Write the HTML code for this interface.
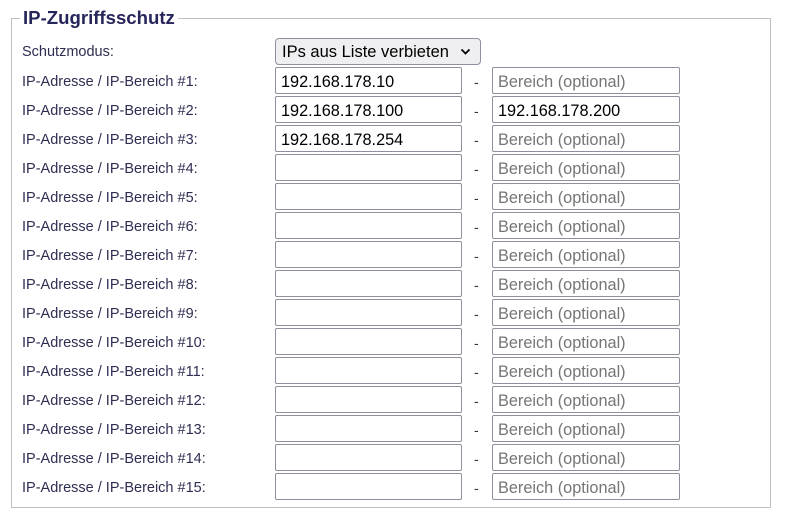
<!DOCTYPE html>
<html><head><style>
body{margin:0;background:#fff;font-family:"Liberation Sans",Arial,sans-serif;}
.fs{position:absolute;left:11px;top:18px;width:760px;height:490px;border:1px solid #c0c0c0;box-sizing:border-box;}
.lg{position:absolute;left:20px;top:7px;background:#fff;padding:0 3px;font-weight:bold;font-size:18.6px;color:#26265a;line-height:22px;}
.lb{position:absolute;left:22px;font-size:14.5px;color:#2e2e52;line-height:16px;}
.in{position:absolute;height:27px;box-sizing:border-box;border:1px solid #8f8f9d;border-radius:2px;font-size:16.3px;line-height:28px;padding-left:5px;color:#000;background:#fff;}
.a{left:275px;width:187px}.b{left:492px;width:188px}
.ph{color:#757575}
.d{position:absolute;left:474px;font-size:14px;color:#333;}
.sel{position:absolute;left:275px;top:38px;width:206px;height:27px;box-sizing:border-box;border:1px solid #8f8f9d;border-radius:4px;background:#efeff2;font-size:16.5px;line-height:27px;padding-left:6px;}
</style></head><body>
<div class="fs"></div>
<div class="lg">IP-Zugriffsschutz</div>
<div class="lb" style="top:44px">Schutzmodus:</div>
<div class="sel">IPs aus Liste verbieten<svg style="position:absolute;right:9px;top:9px" width="11" height="8" viewBox="0 0 11 8"><path d="M1.5 1.5L5.5 5.5L9.5 1.5" fill="none" stroke="#000" stroke-width="1.8"/></svg></div>
<script>
var v=[["192.168.178.10",""],["192.168.178.100","192.168.178.200"],["192.168.178.254",""]];
var h="";
for(var i=0;i<15;i++){var t=67+29*i;var a=v[i]?v[i][0]:"",b=v[i]?v[i][1]:"";
h+='<div class="lb" style="top:'+(t+7)+'px">IP-Adresse / IP-Bereich #'+(i+1)+':</div>';
h+='<div class="in a" style="top:'+t+'px">'+a+'</div>';
h+='<div class="d" style="top:'+(t+7)+'px">-</div>';
h+='<div class="in b '+(b?'':'ph')+'" style="top:'+t+'px">'+(b||'Bereich (optional)')+'</div>';}
document.write(h);
</script>
</body></html>
